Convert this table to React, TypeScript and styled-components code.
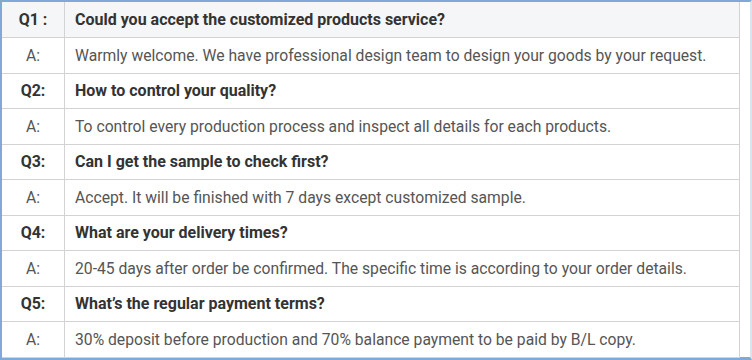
import React from "react";
import styled, { createGlobalStyle } from "styled-components";

const GlobalStyle = createGlobalStyle`
  html, body { margin: 0; padding: 0; background: #ffffff; }
  body { font-family: Roboto, "Liberation Sans", Arial, sans-serif; }
`;

const Frame = styled.div`
  box-sizing: border-box;
  width: 752px;
  height: 360px;
  border-top: 2px solid #80a9da;
  border-left: 2px solid #80a9da;
  border-bottom: 3px solid #80a9da;
  border-right: 2px solid #d6e4f3;
  background: #ffffff;
  padding-right: 8px;
`;

const Table = styled.table`
  width: 738px;
  border-collapse: collapse;
  table-layout: fixed;
`;

const Row = styled.tr<{ $head?: boolean }>`
  height: 35.5px;
  background: ${(p) => (p.$head ? "#f5f6f8" : "#ffffff")};
`;

const LabelCell = styled.td<{ $q?: boolean; $first?: boolean }>`
  width: 62px;
  border: 1px solid #d3d3d3;
  border-left: none;
  border-top: ${(p) => (p.$first ? "none" : "1px solid #d3d3d3")};
  text-align: center;
  padding: 0;
  font-size: ${(p) => (p.$q ? "16px" : "15.7px")};
  color: ${(p) => (p.$q ? "#333333" : "#555555")};
  font-weight: ${(p) => (p.$q ? 700 : 400)};
`;

const TextCell = styled.td<{ $q?: boolean; $first?: boolean }>`
  border: 1px solid #d3d3d3;
  border-top: ${(p) => (p.$first ? "none" : "1px solid #d3d3d3")};
  padding: 0 0 0 10px;
  font-size: ${(p) => (p.$q ? "16px" : "15.7px")};
  color: ${(p) => (p.$q ? "#333333" : "#555555")};
  font-weight: ${(p) => (p.$q ? 700 : 400)};
  white-space: nowrap;
`;

const faqs = [
  {
    q: "Q1 :",
    question: "Could you accept the customized products service?",
    answer:
      "Warmly welcome. We have professional design team to design your goods by your request.",
  },
  {
    q: "Q2:",
    question: "How to control your quality?",
    answer:
      "To control every production process and inspect all details for each products.",
  },
  {
    q: "Q3:",
    question: "Can I get the sample to check first?",
    answer: "Accept. It will be finished with 7 days except customized sample.",
  },
  {
    q: "Q4:",
    question: "What are your delivery times?",
    answer:
      "20-45 days after order be confirmed. The specific time is according to your order details.",
  },
  {
    q: "Q5:",
    question: "What’s the regular payment terms?",
    answer:
      "30% deposit before production and 70% balance payment to be paid by B/L copy.",
  },
];

export default function App() {
  return (
    <>
      <GlobalStyle />
      <Frame>
        <Table>
          <tbody>
            {faqs.map((f, i) => (
              <React.Fragment key={f.q}>
                <Row $head={i === 0}>
                  <LabelCell $q $first={i === 0}>{f.q}</LabelCell>
                  <TextCell $q $first={i === 0}>{f.question}</TextCell>
                </Row>
                <Row>
                  <LabelCell>A:</LabelCell>
                  <TextCell>{f.answer}</TextCell>
                </Row>
              </React.Fragment>
            ))}
          </tbody>
        </Table>
      </Frame>
    </>
  );
}
